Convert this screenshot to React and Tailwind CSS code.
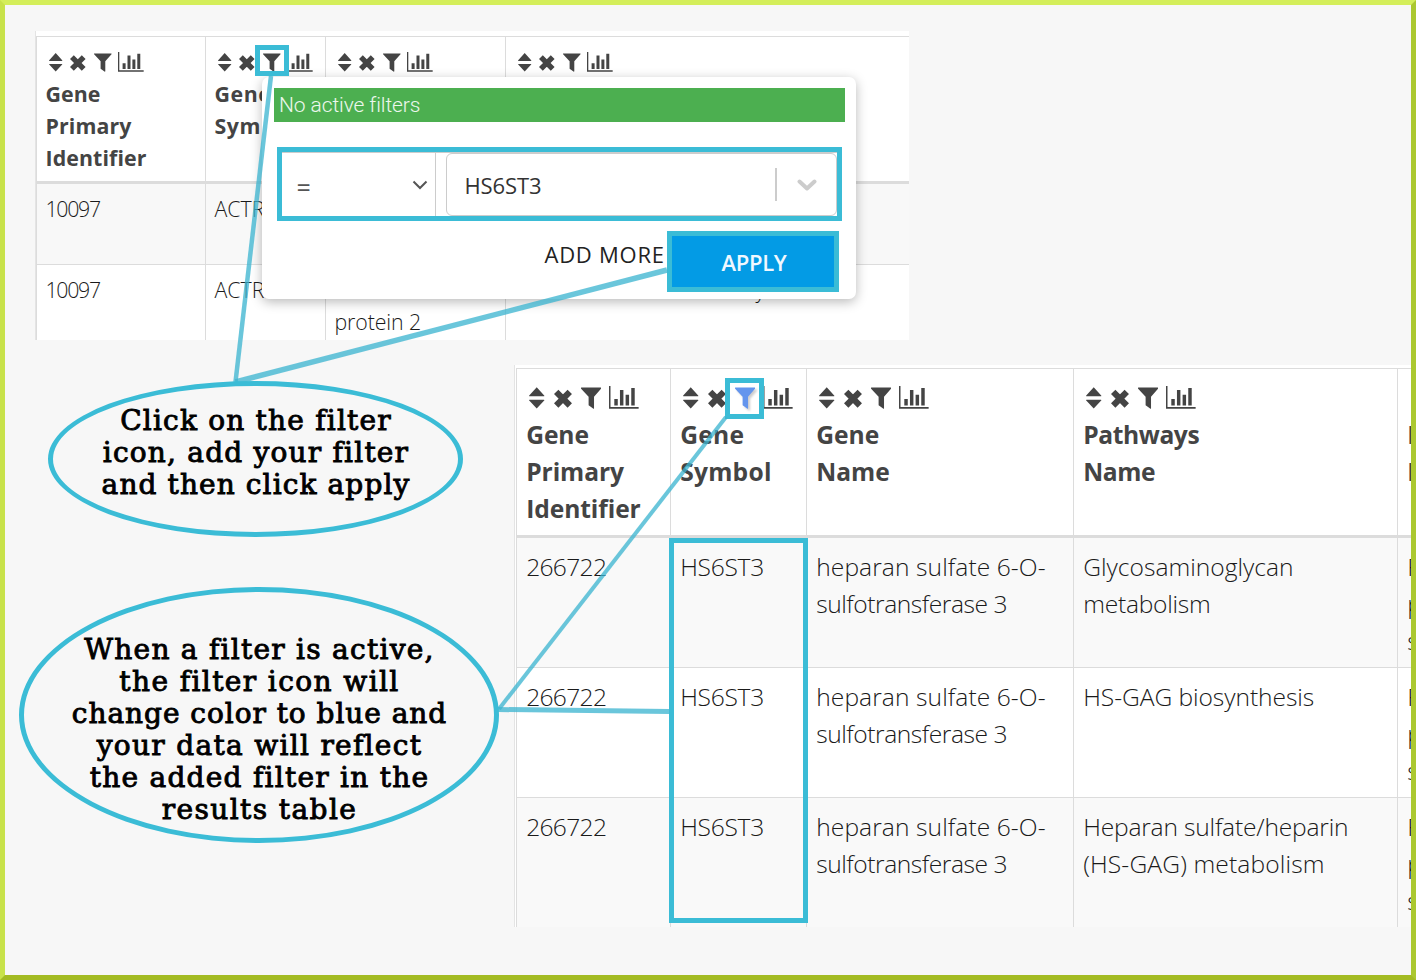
import React from 'react';

function SortIcon() {
  return (
    <svg viewBox="0 0 13.4 20" className="h-[0.9375em] w-[0.628em]" fill="currentColor">
      <path d="M6.7 1 13.2 8.2a.4.4 0 0 1-.3.7H.5a.4.4 0 0 1-.3-.7zM6.7 19.6.2 12.6a.4.4 0 0 1 .3-.7h12.4a.4.4 0 0 1 .3.7z" />
    </svg>
  );
}

function TimesIcon() {
  return (
    <svg viewBox="0 0 15.6 20" className="ml-[0.36em] h-[0.9375em] w-[0.731em]" fill="none" stroke="currentColor" strokeWidth="5.4">
      <path d="M1.900 5.100 13.700 16.900M13.700 5.100 1.900 16.900" />
    </svg>
  );
}

function FilterIcon({ active }) {
  return (
    <svg
      viewBox="0 0 17.6 20"
      className={active ? 'ml-[0.38em] h-[0.9375em] w-[0.825em] text-[#6495ed] drop-shadow-[2px_2px_1px_rgba(0,0,0,0.2)]' : 'ml-[0.38em] h-[0.9375em] w-[0.825em]'}
      fill="currentColor"
    >
      <path d="M.4 1.400h16.800c.5 0 .6.5.3.9L11.300 9.300v10c0 .5-.4.6-.8.3l-3.900-2.800V9.300L.1 2.300C-.2 1.900 0 1.400.4 1.400z" />
    </svg>
  );
}

function ChartIcon() {
  return (
    <svg viewBox="0 0 25.7 20" className="ml-[0.32em] h-[0.9375em] w-[1.205em]" fill="currentColor">
      <path d="M0 0h1.300v18.300h24.400v1.500H0zM4.600 11.300h3v5.600h-3zM9.500 3.500h3v13.400h-3zM14.400 7.500h3v9.400h-3zM19.300 1.800h3v15.100h-3z" />
    </svg>
  );
}

function ColumnTools({ active, large }) {
  return (
    <div className={large ? 'flex items-start pl-[3.1px] text-[#444]' : 'flex items-start pl-[3.7px] text-[#444]'}>
      <SortIcon />
      <TimesIcon />
      <FilterIcon active={active} />
      <ChartIcon />
    </div>
  );
}

function HeadCell({ large, lines, active, tracking = '' }) {
  return (
    <div className={large ? 'overflow-hidden border-l border-[#dcdcdc] pt-[17px] pl-[9.2px]' : 'overflow-hidden border-l border-[#dcdcdc] pt-[14.6px] pl-[8.5px]'}>
      <ColumnTools active={active} large={large} />
      <div className={`font-bold whitespace-nowrap text-[#444] ${large ? 'mt-[7.4px]' : 'mt-[6.4px]'} ${tracking}`}>
        {lines.map((line) => (
          <div key={line}>{line}</div>
        ))}
      </div>
    </div>
  );
}

function BodyCell({ large, lines }) {
  return (
    <div className={large ? 'overflow-hidden border-l border-[#dcdcdc] pt-[10px] pl-[9.2px]' : 'overflow-hidden border-l border-[#dcdcdc] pt-[9px] pl-[8.5px]'}>
      {lines.map(([text, style = ''], i) => (
        <div key={i} className={`whitespace-pre ${style}`}>{text}</div>
      ))}
    </div>
  );
}

function SourceTable() {
  const cols = 'grid grid-cols-[169px_120px_180px_404px]';
  return (
    <section className="mt-[26px] ml-[30px] h-[309px] w-[874px] overflow-hidden border-l border-[#e4e4e4] bg-white pt-[5px] text-[21.33px] leading-[32px] font-light text-[#1a1a1a]">
      <div className={`${cols} h-[148px] border-t border-b-3 border-t-[#dcdcdc] border-b-[#dcdcdc]`}>
        <HeadCell lines={['Gene', 'Primary', 'Identifier']} tracking="tracking-[0.1px]" />
        <HeadCell lines={['Gene', 'Symbol']} tracking="tracking-[0.6px]" />
        <HeadCell lines={[]} />
        <HeadCell lines={[]} />
      </div>
      <div className={`${cols} h-[81px] border-b border-[#dcdcdc] bg-[#f8f8f8]`}>
        <BodyCell lines={[['10097', 'tracking-[-1.3px]']]} />
        <BodyCell lines={[['ACTR2']]} />
        <BodyCell lines={[]} />
        <BodyCell lines={[]} />
      </div>
      <div className={`${cols} h-[81px]`}>
        <BodyCell lines={[['10097', 'tracking-[-1.3px]']]} />
        <BodyCell lines={[['ACTR2']]} />
        <BodyCell lines={[[' '], ['protein 2', 'tracking-[-0.1px]']]} />
        <BodyCell lines={[['y', 'pl-[241px]']]} />
      </div>
    </section>
  );
}

const rows = [
  { id: 1, bg: 'bg-[#f9f9f9] border-b', pathway: [['Glycosaminoglycan'], ['metabolism', 'tracking-[-0.25px]']] },
  { id: 2, bg: 'bg-white border-b', pathway: [['HS-GAG biosynthesis', 'tracking-[-0.07px]']] },
  { id: 3, bg: 'bg-[#f9f9f9]', pathway: [['Heparan sulfate/heparin', 'tracking-[-0.2px]'], ['(HS-GAG) metabolism', 'tracking-[0.13px]']] },
];

function ResultsTable() {
  const cols = 'grid grid-cols-[154px_136px_267px_324px_14px]';
  return (
    <section className="mt-[25px] ml-auto h-[562px] w-[897px] overflow-hidden border-l border-[#e4e4e4] bg-white pt-[3px] pl-px text-[24.6px] leading-[37px] font-light text-[#1a1a1a]">
      <div className={`${cols} h-[170px] border-t border-b-3 border-t-[#dcdcdc] border-b-[#dcdcdc]`}>
        <HeadCell large lines={['Gene', 'Primary', 'Identifier']} tracking="tracking-[-0.08px]" />
        <HeadCell large active lines={['Gene', 'Symbol']} tracking="tracking-[0.25px]" />
        <HeadCell large lines={['Gene', 'Name']} />
        <HeadCell large lines={['Pathways', 'Name']} tracking="tracking-[-0.4px]" />
        <HeadCell large lines={['P', 'N']} />
      </div>
      {rows.map((row) => (
        <div key={row.id} className={`${cols} h-[130px] border-[#dcdcdc] ${row.bg}`}>
          <BodyCell large lines={[['266722', 'tracking-[-0.7px]']]} />
          <BodyCell large lines={[['HS6ST3', 'tracking-[-0.3px]']]} />
          <BodyCell large lines={[['heparan sulfate 6-O-', 'tracking-[0.08px]'], ['sulfotransferase 3', 'tracking-[-0.45px]']]} />
          <BodyCell large lines={row.pathway} />
          <BodyCell large lines={[['R'], ['p'], ['s']]} />
        </div>
      ))}
    </section>
  );
}

function FilterPopover() {
  return (
    <div className="absolute top-[72px] left-[257px] h-[222px] w-[594px] rounded-[7px] bg-white px-[12px] pt-[11px] shadow-[0_3px_12px_rgba(0,0,0,0.28)]">
      <div className="h-[34px] w-[571px] bg-[#4caf50] pl-[5px] font-['Roboto',sans-serif] text-[21px] leading-[34px] font-light tracking-[-0.1px] text-white/90">
        No active filters
      </div>
      <div className="mt-[25px] ml-[3px] flex h-[74px] w-[565px] border-5 border-[#3bbcd6]">
        <div className="flex w-[154px] items-center justify-between border-t border-r border-[#ccc] pr-[7px] pl-[14.5px] text-[#555]">
          <span className="pt-[5px] text-[25px] leading-none font-normal">=</span>
          <svg viewBox="0 0 16 10" className="h-[10px] w-[16px]" fill="none" stroke="currentColor" strokeWidth="2">
            <path d="M1.500 1.500 8 8l6.500-6.500" />
          </svg>
        </div>
        <div className="flex flex-1 border-t border-[#ccc] pl-[10px]">
          <div className="flex flex-1 items-center rounded-[6px] border border-[#ccc] pl-[17.5px]">
            <span className="pt-px text-[22px] font-normal tracking-[-0.1px] text-[#333]">HS6ST3</span>
            <span className="ml-auto h-[33px] w-[2px] bg-[#ccc]" />
            <svg viewBox="0 0 20 12" className="mr-[19.5px] ml-[19.5px] h-[12px] w-[20px]" fill="none" stroke="#ccc" strokeWidth="4" strokeLinecap="round" strokeLinejoin="round">
              <path d="M2.500 2.500 10 9.500l7.500-7" />
            </svg>
          </div>
        </div>
      </div>
      <div className="mt-[10px] flex items-start">
        <span className="ml-[270.5px] w-[122.5px] pt-[7px] text-[22px] leading-[32px] font-normal tracking-[0.75px] whitespace-nowrap text-[#222]">ADD MORE</span>
        <span className="flex h-[61px] w-[172px] items-center justify-center border-5 border-[#3bbcd6] bg-[#039be5] pt-px pl-[2px] text-[22px] font-semibold tracking-[-0.3px] text-[#f0f8ff]">
          APPLY
        </span>
      </div>
    </div>
  );
}

function Callout({ className, lines }) {
  return (
    <div className={`absolute rounded-[50%] border-5 border-[#3bbcd6] bg-[#f7f7f7] pl-px text-center font-['DejaVu_Serif',serif] text-[28px] leading-[32px] text-black [-webkit-text-stroke:0.9px_#000] ${className}`}>
      {lines.map(([text, tracking]) => (
        <div key={text} className={`whitespace-nowrap ${tracking}`}>{text}</div>
      ))}
    </div>
  );
}

export default function App() {
  return (
    <main className="relative flex h-[980px] w-[1416px] flex-col overflow-hidden border-5 border-t-[#d4ee5a] border-r-[#abc830] border-b-[#a3bb23] border-l-[#c8e24a] bg-[#f7f7f7] font-['Open_Sans','Noto_Sans',sans-serif]">
      <SourceTable />
      <ResultsTable />
      <FilterPopover />
      <div className="absolute top-[40px] left-[250px] h-[31px] w-[34px] border-5 border-[#3bbcd6]" />
      <div className="absolute top-[373px] left-[720px] h-[41px] w-[39px] border-5 border-[#3bbcd6]" />
      <div className="absolute top-[533px] left-[664px] h-[385px] w-[139px] border-5 border-[#3bbcd6]" />
      <svg viewBox="5 5 1406 970" className="absolute inset-0 h-[970px] w-[1406px]" fill="none" stroke="#3bb4d0" strokeOpacity="0.76">
        <path d="M271 76 235.500 382" strokeWidth="4.500" />
        <path d="M667 270 235.500 382" strokeWidth="5.500" />
        <path d="M726 417 499 709" strokeWidth="4" />
        <path d="M498 709.500 669 711.500" strokeWidth="5" />
      </svg>
      <Callout
        className="top-[376px] left-[43px] h-[156px] w-[415px] pt-[18.5px]"
        lines={[
          ['Click on the filter', 'tracking-[1.2px]'],
          ['icon, add your filter', 'tracking-[1.2px]'],
          ['and then click apply', 'tracking-[1.1px]'],
        ]}
      />
      <Callout
        className="top-[582px] left-[14px] h-[256px] w-[480px] pt-[41.5px]"
        lines={[
          ['When a filter is active,', 'tracking-[1.25px]'],
          ['the filter icon will', 'tracking-[1.4px]'],
          ['change color to blue and', 'tracking-[0.95px]'],
          ['your data will reflect', 'tracking-[1.3px]'],
          ['the added filter in the', 'tracking-[1.25px]'],
          ['results table', 'tracking-[1.4px]'],
        ]}
      />
    </main>
  );
}
